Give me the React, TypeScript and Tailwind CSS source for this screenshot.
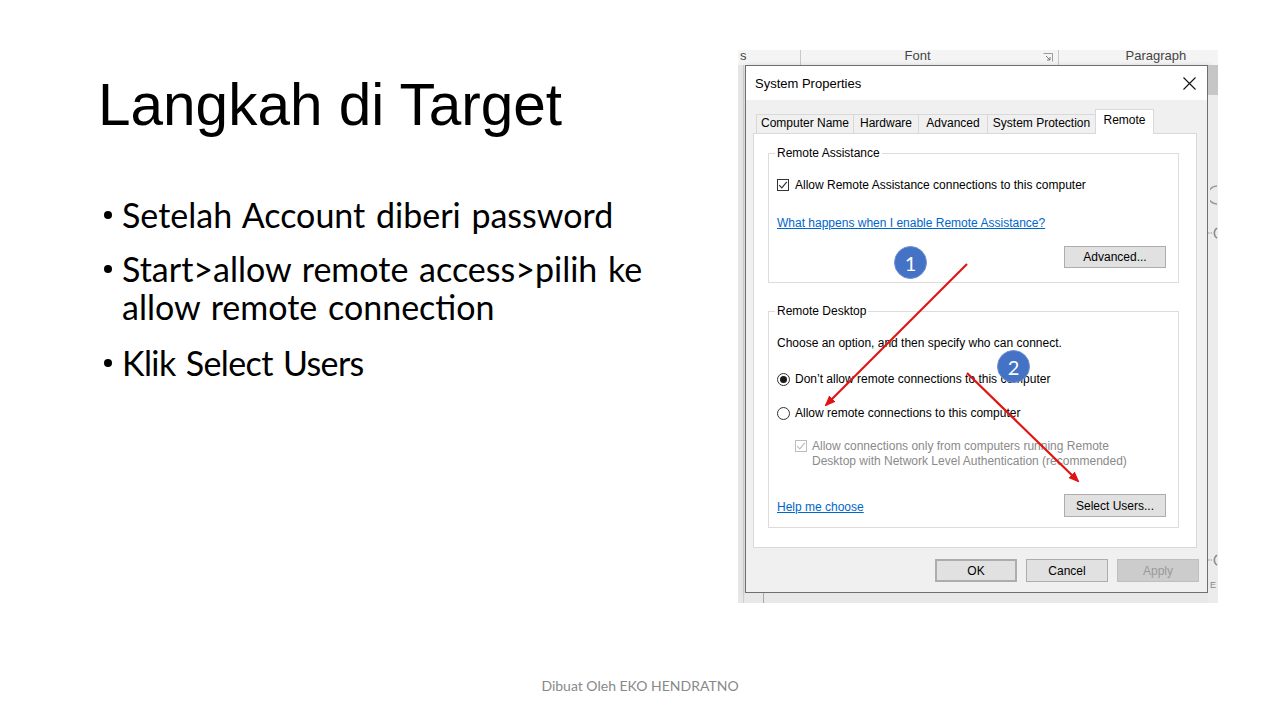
import React from "react";

function Bullet({ children, className = "" }: { children: React.ReactNode; className?: string }) {
  return (
    <div className={"flex pl-[104px] " + className}>
      <span className="mt-[15px] h-[8px] w-[8px] shrink-0 rounded-full bg-black" />
      <div className="ml-[10px] whitespace-nowrap [word-spacing:2px]">{children}</div>
    </div>
  );
}

function CheckBox({ disabled = false }: { disabled?: boolean }) {
  const c = disabled ? "#bcbcbc" : "#333333";
  return (
    <span
      className={
        "flex h-[12px] w-[12px] shrink-0 items-center justify-center border bg-white " +
        (disabled ? "border-[#bcbcbc]" : "border-[#333333]")
      }
    >
      <svg width="10" height="10" viewBox="0 0 10 10">
        <path d="M1.2 5.2 L3.8 7.8 L8.8 1.8" fill="none" stroke={c} strokeWidth="1.2" />
      </svg>
    </span>
  );
}

function Radio({ checked = false }: { checked?: boolean }) {
  return (
    <span className="flex h-[13px] w-[13px] shrink-0 items-center justify-center rounded-full border border-[#333333] bg-white">
      {checked && <span className="h-[7px] w-[7px] rounded-full bg-[#1a1a1a]" />}
    </span>
  );
}

function WinButton({ children, className = "" }: { children: React.ReactNode; className?: string }) {
  return (
    <div
      className={
        "flex items-center justify-center border border-[#adadad] bg-[#e1e1e1] text-[12px] leading-[14px] text-black " +
        className
      }
    >
      {children}
    </div>
  );
}

function Screenshot() {
  return (
    <div className="relative mt-[50px] flex h-[553px] w-[480px] shrink-0 flex-col overflow-hidden bg-[#f0f0f0] font-['Liberation_Sans',Arial,sans-serif]">
      {/* ribbon strip */}
      <div className="flex h-[15px] shrink-0 items-start overflow-hidden bg-[#f4f4f4] text-[13px] leading-[13px] text-[#444444]">
        <span className="-mt-[1px] pl-[2px]">s</span>
        <span className="ml-[53px] h-full w-px bg-[#c8c8c8]" />
        <span className="-mt-[1px] ml-[104px]">Font</span>
        <svg className="ml-[112px] mt-[3px]" width="10" height="9" viewBox="0 0 10 9">
          <path d="M0.5 0.5 H9.5 V8.5" fill="none" stroke="#9a9a9a" strokeWidth="1" />
          <path d="M3 3 L7 7 M7 4 V7 H4" fill="none" stroke="#7a7a7a" strokeWidth="1" />
        </svg>
        <span className="ml-[5px] h-full w-px bg-[#c8c8c8]" />
        <span className="-mt-[1px] ml-[67px]">Paragraph</span>
      </div>

      <div className="flex flex-1">
        {/* left strip */}
        <div className="flex w-[7px] shrink-0 bg-[#e6e6e6]">
          <div className="ml-[5px] w-px bg-[#d0d0d0]" />
        </div>

        {/* dialog column */}
        <div className="flex w-[463px] shrink-0 flex-col">
          <div className="flex flex-col border border-[#6f6f6f] bg-[#f0f0f0] shadow-[2px_2px_6px_rgba(0,0,0,0.25)]">
            {/* title bar */}
            <div className="flex h-[34px] items-center justify-between bg-white pl-[9px] pr-[11px]">
              <span className="mt-[1px] text-[13px] leading-[16px] text-black">System Properties</span>
              <svg width="13" height="13" viewBox="0 0 13 13">
                <path d="M0.5 0.5 L12.5 12.5 M12.5 0.5 L0.5 12.5" stroke="#111111" strokeWidth="1.1" />
              </svg>
            </div>

            {/* body */}
            <div className="flex flex-col px-[7px] pb-[10px] pt-[9px]">
              {/* tabs */}
              <div className="flex h-[24px] items-end pl-[3px] text-[12px] leading-[14px] text-black">
                <div className="flex h-[19px] w-[98px] justify-center border border-b-0 border-[#d9d9d9] bg-[#f0f0f0] pt-[1px]">
                  Computer Name
                </div>
                <div className="-ml-px flex h-[19px] w-[66px] justify-center border border-b-0 border-[#d9d9d9] bg-[#f0f0f0] pt-[1px]">
                  Hardware
                </div>
                <div className="-ml-px flex h-[19px] w-[70px] justify-center border border-b-0 border-[#d9d9d9] bg-[#f0f0f0] pt-[1px]">
                  Advanced
                </div>
                <div className="-ml-px flex h-[19px] w-[109px] justify-center border border-b-0 border-[#d9d9d9] bg-[#f0f0f0] pt-[1px]">
                  System Protection
                </div>
                <div className="relative z-10 -mb-px -ml-px flex h-[25px] w-[59px] justify-center border border-b-0 border-[#d9d9d9] bg-white pt-[3px]">
                  Remote
                </div>
              </div>

              {/* panel */}
              <div className="mr-[3px] flex h-[415px] flex-col border border-[#d9d9d9] bg-white pl-[14px] pr-[17px] text-[12px] leading-[14px] text-black">
                <fieldset className="mt-[12px] border border-[#dcdcdc] pb-[14px] pl-[8px] pr-[12px]">
                  <legend className="-ml-[2px] px-[2px] leading-[14px]">Remote Assistance</legend>
                  <div className="mt-[18px] flex h-[14px] items-center">
                    <CheckBox />
                    <span className="ml-[6px]">Allow Remote Assistance connections to this computer</span>
                  </div>
                  <div className="mt-[24px] text-[#0066cc] underline">What happens when I enable Remote Assistance?</div>
                  <div className="mt-[16px] flex justify-end">
                    <WinButton className="h-[22px] w-[102px]">Advanced...</WinButton>
                  </div>
                </fieldset>

                <fieldset className="mt-[21px] border border-[#dcdcdc] pb-[10px] pl-[8px] pr-[12px]">
                  <legend className="-ml-[2px] px-[2px] leading-[14px]">Remote Desktop</legend>
                  <div className="mt-[18px]">Choose an option, and then specify who can connect.</div>
                  <div className="mt-[22px] flex h-[14px] items-center">
                    <Radio checked />
                    <span className="ml-[5px]">Don’t allow remote connections to this computer</span>
                  </div>
                  <div className="mt-[20px] flex h-[14px] items-center">
                    <Radio />
                    <span className="ml-[5px]">Allow remote connections to this computer</span>
                  </div>
                  <div className="mt-[19px] flex items-start pl-[18px]">
                    <span className="mt-[1px]">
                      <CheckBox disabled />
                    </span>
                    <span className="ml-[5px] leading-[15px] text-[#8a8a8a]">
                      Allow connections only from computers running Remote
                      <br />
                      Desktop with Network Level Authentication (recommended)
                    </span>
                  </div>
                  <div className="mt-[25px] flex h-[23px] items-center justify-between">
                    <span className="mt-[2px] text-[#0066cc] underline">Help me choose</span>
                    <WinButton className="h-[23px] w-[102px]">Select Users...</WinButton>
                  </div>
                </fieldset>
              </div>

              {/* buttons */}
              <div className="mr-[1px] mt-[11px] flex justify-end gap-[9px]">
                <WinButton className="h-[23px] w-[82px] border-2 border-[#0078d7]">OK</WinButton>
                <WinButton className="h-[23px] w-[82px]">Cancel</WinButton>
                <div className="flex h-[23px] w-[82px] items-center justify-center border border-[#bfbfbf] bg-[#cccccc] text-[12px] leading-[14px] text-[#9a9a9a]">
                  Apply
                </div>
              </div>
            </div>
          </div>
          {/* bottom strip */}
          <div className="flex flex-1 bg-[#e8e8e8]">
            <div className="ml-[18px] w-px bg-[#a8a8a8]" />
          </div>
        </div>

        {/* right strip */}
        <div className="flex w-[10px] shrink-0 flex-col bg-[#ececec]">
          <div className="h-[30px] bg-[#c6c6c6]" />
          <svg className="ml-[2px] mt-[90px]" width="8" height="20" viewBox="0 0 8 20">
            <path d="M7 1 A9 9 0 0 0 7 19" fill="none" stroke="#9a9a9a" strokeWidth="1.5" />
          </svg>
          <svg className="mt-[22px]" width="10" height="12" viewBox="0 0 10 12">
            <path d="M0 6 H4" stroke="#9a9a9a" strokeWidth="1" strokeDasharray="1.5 1" />
            <path d="M9 1 A6 6 0 0 0 9 11" fill="none" stroke="#8a8a8a" strokeWidth="1.5" />
          </svg>
          <svg className="mt-[315px]" width="10" height="12" viewBox="0 0 10 12">
            <path d="M0 6 H4" stroke="#9a9a9a" strokeWidth="1" strokeDasharray="1.5 1" />
            <path d="M9 1 A6 6 0 0 0 9 11" fill="none" stroke="#8a8a8a" strokeWidth="1.5" />
          </svg>
          <span className="ml-[2px] mt-[14px] text-[9px] leading-[10px] text-[#888888]">E</span>
        </div>
      </div>

      {/* annotations overlay */}
      <svg className="pointer-events-none absolute left-0 top-0" width="480" height="553" viewBox="0 0 480 553">
        <defs>
          <marker id="ah" markerWidth="11" markerHeight="9" refX="9" refY="4.5" orient="auto" markerUnits="userSpaceOnUse">
            <path d="M0,0 L11,4.5 L0,9 z" fill="#e01414" />
          </marker>
        </defs>
        <line x1="229" y1="214" x2="88" y2="355" stroke="#e01414" strokeWidth="2.2" markerEnd="url(#ah)" />
        <line x1="229" y1="323" x2="340" y2="431" stroke="#e01414" strokeWidth="2.2" markerEnd="url(#ah)" />
      </svg>
      <div className="absolute left-[156px] top-[196px] flex h-[33px] w-[33px] items-center justify-center rounded-full border border-[#6f8fd0] bg-[#4472c4] font-['Lato',sans-serif] text-[20px] leading-[20px] text-white">
        1
      </div>
      <div className="absolute left-[259px] top-[300px] flex h-[33px] w-[33px] items-center justify-center rounded-full border border-[#6f8fd0] bg-[#4472c4] font-['Lato',sans-serif] text-[20px] leading-[20px] text-white">
        2
      </div>
    </div>
  );
}

export default function App() {
  return (
    <div className="flex h-[720px] w-[1280px] flex-col overflow-hidden bg-white">
      <div className="flex flex-1">
        <div className="w-[738px] shrink-0 pt-[76px]">
          <h1 className="whitespace-nowrap pl-[98px] font-['Liberation_Sans',Arial,sans-serif] text-[58.5px] font-normal leading-[58.5px] text-black">
            Langkah di Target
          </h1>
          <div className="mt-[61px] font-['Lato',sans-serif] text-[34px] leading-[38px] text-black">
            <Bullet>Setelah Account diberi password</Bullet>
            <Bullet className="mt-[16px]">
              Start&gt;allow remote access&gt;pilih ke
              <br />
              allow remote connection
            </Bullet>
            <Bullet className="mt-[18px] tracking-[-0.6px]">Klik Select Users</Bullet>
          </div>
        </div>
        <Screenshot />
      </div>
      <div className="pb-[25px] text-center font-['Lato',sans-serif] text-[14px] leading-[18px] text-[#898989]">
        Dibuat Oleh EKO HENDRATNO
      </div>
    </div>
  );
}
